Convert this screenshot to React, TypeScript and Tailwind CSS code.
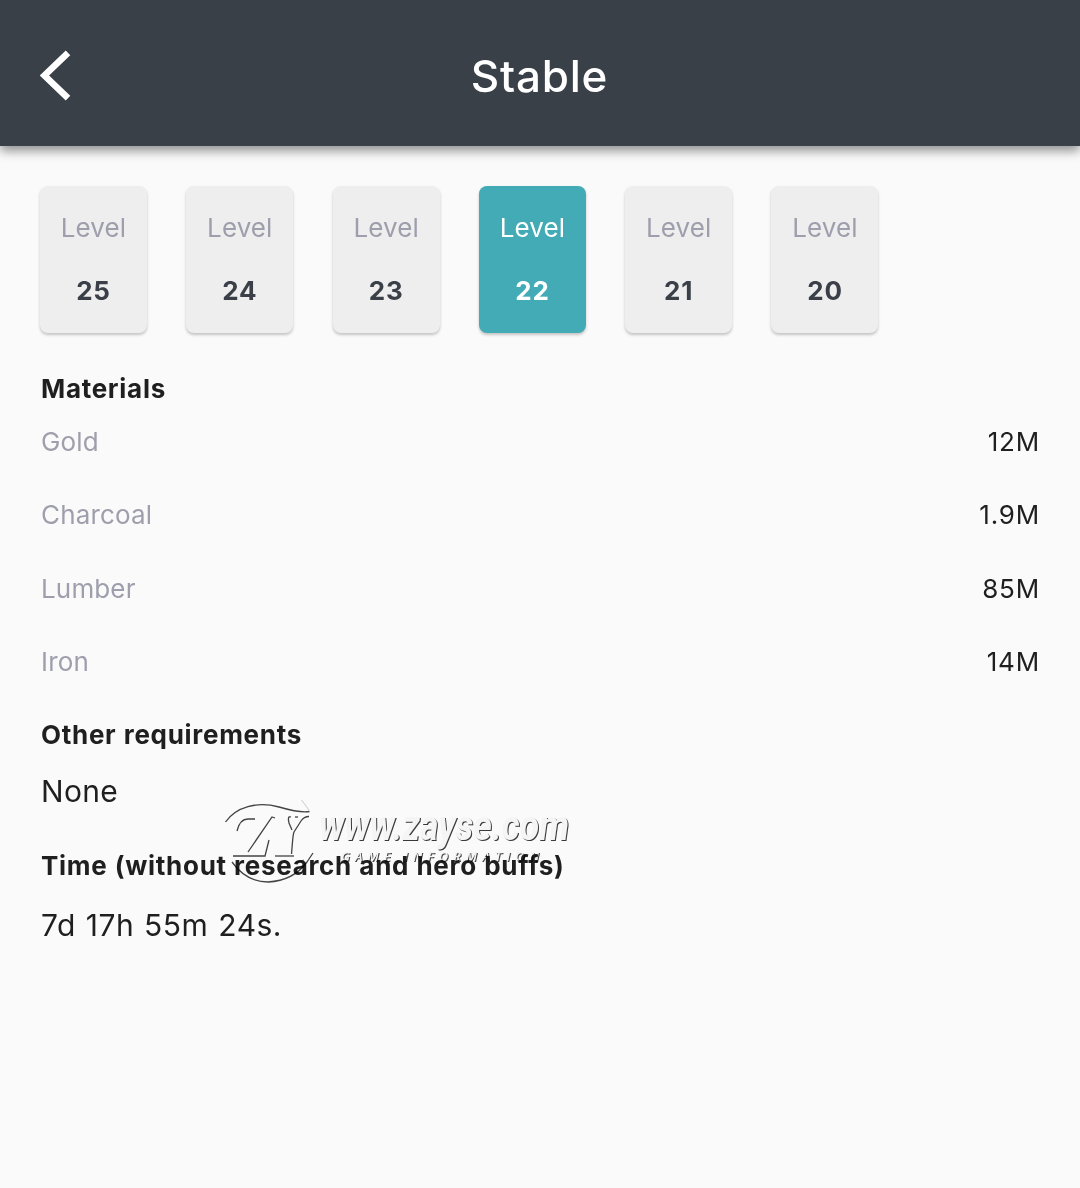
import { useState } from 'react'

interface Material {
  name: string
  amount: string
}

const levels = [25, 24, 23, 22, 21, 20]

const materials: Material[] = [
  { name: 'Gold', amount: '12M' },
  { name: 'Charcoal', amount: '1.9M' },
  { name: 'Lumber', amount: '85M' },
  { name: 'Iron', amount: '14M' },
]

function Header({ title }: { title: string }) {
  return (
    <header className="relative flex h-[146px] items-center justify-center bg-[#3a4048] pt-[6px] shadow-[0_5px_10px_rgba(0,0,0,0.42)]">
      <button aria-label="Back" className="absolute left-[40px] top-[50px] cursor-pointer">
        <svg width="31" height="51" viewBox="0 0 31 51" fill="none">
          <path d="M28 2.8 L4.5 25.5 L28 48.2" stroke="#fff" strokeWidth="6.5" />
        </svg>
      </button>
      <h1 className="pr-[1px] text-[44px] font-medium leading-none tracking-[0.8px] text-white">{title}</h1>
    </header>
  )
}

function LevelCard({ level, active, onSelect }: { level: number; active: boolean; onSelect: () => void }) {
  return (
    <button
      onClick={onSelect}
      className={`flex h-[147px] w-[107px] cursor-pointer flex-col items-center rounded-[8px] pt-[24px] shadow-[0_2px_3px_rgba(0,0,0,0.22)] ${
        active ? 'bg-[#43abb6] text-white' : 'bg-[#eeeeee] text-[#3a3f48]'
      }`}
    >
      <span className={`text-[26px] leading-[36px] tracking-[0.1px] ${active ? 'text-white' : 'text-[#9f9eac]'}`}>
        Level
      </span>
      <span className="mt-[27px] text-[26px] font-bold leading-[36px] tracking-[0.8px]">{level}</span>
    </button>
  )
}

function SectionTitle({ children }: { children: string }) {
  return (
    <h2 className="text-[26px] font-bold leading-[36px] tracking-[0.7px] [word-spacing:0.5px]">{children}</h2>
  )
}

// Embossed site mark: page-coloured shapes with a thin dark edge on the lower right
function Watermark() {
  return (
    <svg
      className="pointer-events-none absolute left-[220px] top-[780px] overflow-visible mix-blend-multiply"
      width="370"
      height="120"
      viewBox="220 780 370 120"
      fill="none"
      aria-hidden="true"
    >
      <g stroke="#444" strokeWidth="1.3">
        <path d="M225.500 822 C236 807 257 801 279 807 C293 811 302 813 309.500 811.500" />
        <path d="M301.500 800 L309 810" stroke="#ccc" strokeWidth="1" />
        <path d="M237 831 C239 822 243 819 248 819 L255 819" />
        <path d="M275 818 L272 817 L248 852" />
        <path d="M269 840 L265 856 L233 856" />
        <path d="M275 856 L294 856" />
        <path d="M309 816.500 C305 816.500 303 818 301 821 L294 832 C292.500 836 292.500 844 291.500 854" />
        <path d="M291 817 C288 816 288 819 289 823 L292 830" />
        <path d="M298 817 L295 817" />
        <path d="M232 862 C242 876 254 882 268 882 C286 881 299 873 307 862 L313 853" />
        <path d="M295 863 L304 860" stroke="#888" />
      </g>
      <g fontStyle="italic">
        <text
          x="319"
          y="839.500"
          fontFamily="Roboto"
          fontSize="43"
          fontWeight="700"
          textLength="250"
          lengthAdjust="spacingAndGlyphs"
          className="fill-[#fafafa] [filter:drop-shadow(1.5px_1.3px_0_#3a3a3a)]"
        >
          www.zayse.com
        </text>
        <text
          x="341"
          y="861"
          fontFamily="Open Sans"
          fontSize="13"
          fontWeight="600"
          textLength="198"
          className="fill-[#fafafa] [filter:drop-shadow(1.2px_1.2px_0_#444)]"
        >
          GAME INFORMATION
        </text>
      </g>
    </svg>
  )
}

export default function App() {
  const [selected, setSelected] = useState(22)

  return (
    <div className="relative min-h-[1188px] w-full bg-[#fafafa] font-['Inter',sans-serif] text-[#1f1f20]">
      <Header title="Stable" />

      <main className="px-[40px] pt-[40px]">
        <div className="flex gap-[39.3px]">
          {levels.map((level) => (
            <LevelCard key={level} level={level} active={level === selected} onSelect={() => setSelected(level)} />
          ))}
        </div>

        <div className="pl-[1px]">
          <section className="mt-[38px]">
            <SectionTitle>Materials</SectionTitle>
            <ul className="mt-[17px] flex flex-col gap-[37.3px]">
              {materials.map((m) => (
                <li key={m.name} className="flex justify-between text-[26px] leading-[36px]">
                  <span className="tracking-[0.15px] text-[#9f9eac]">{m.name}</span>
                  <span className="tracking-[0.8px]">{m.amount}</span>
                </li>
              ))}
            </ul>
          </section>

          <section className="mt-[37px]">
            <SectionTitle>Other requirements</SectionTitle>
            <p className="mt-[18px] text-[30px] leading-[40px] tracking-[0.3px]">None</p>
          </section>

          <section className="mt-[37px]">
            <SectionTitle>Time (without research and hero buffs)</SectionTitle>
            <p className="mt-[21px] text-[30px] leading-[40px] tracking-[0.5px] [word-spacing:1px]">7d 17h 55m 24s.</p>
          </section>
        </div>
      </main>

      <Watermark />
    </div>
  )
}
